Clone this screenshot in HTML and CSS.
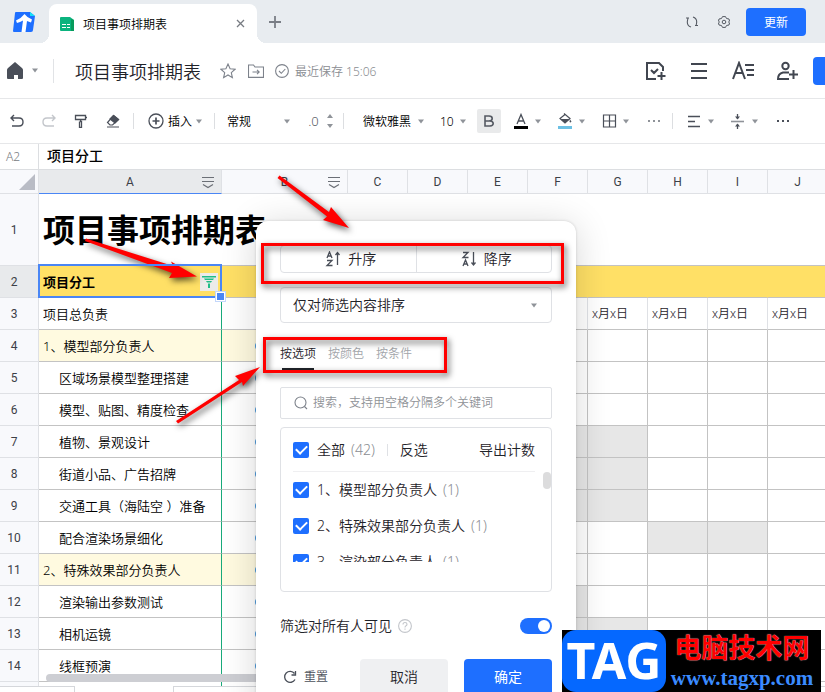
FILE: index.html
```html
<!DOCTYPE html>
<html lang="zh-CN">
<head>
  <meta charset="UTF-8">
  <meta name="viewport" content="width=device-width, initial-scale=1.0">
  <title>项目事项排期表</title>
  <link rel="stylesheet" href="styles.css">
</head>
<body>
  <!-- 图标 -->
  <svg class="sprite" aria-hidden="true">
    <symbol id="caret" viewBox="0 0 6 5"><path d="M0 0.5h6L3 4.5z" fill="#8f9399"/></symbol>
    <symbol id="lines" viewBox="0 0 14 14"><path d="M1 2.5h12M1 6.5h12M2 9.5l5 3 5-3" fill="none" stroke="#6b6f76" stroke-width="1.2"/></symbol>
  </svg>

  <!-- 标签栏 -->
  <div class="tabbar">
    <svg class="logo" width="24" height="22" viewBox="0 0 24 22">
      <path d="M4 1h14l5 4-2 14q0 2-2 2H2q-1 0-1-1L3 2q0-1 1-1z" fill="#1e6fff"/>
      <path d="M18 1l5 4h-5z" fill="#14e0f5"/>
      <path d="M4 9.500q5-2 8.500-6.500 3 4 7.500 5.500l-1 3q-2-1-4-1.500L13.500 21h-4L11 9.500Q8 11 5 12z" fill="#fff"/>
    </svg>
    <div class="doc-tab">
      <svg width="14" height="14" viewBox="0 0 14 14">
        <path d="M1 0h9l4 3v10q0 1-1 1H1q-1 0-1-1V1q0-1 1-1z" fill="#0bb37e"/>
        <path d="M11 2l3 1v11h-3z" fill="#079b5c"/>
        <path d="M2 7.5h4M7 7.5h3M2 10.5h4M7 10.5h3" stroke="#fff" stroke-width="1.2"/>
      </svg>
      <span class="doc-tab-title">项目事项排期表</span>
      <button class="plain" aria-label="关闭"><svg width="9" height="9" viewBox="0 0 9 9"><path d="M1 1l7 7M8 1L1 8" stroke="#777b82" stroke-width="1.3"/></svg></button>
    </div>
    <button class="plain add-tab" aria-label="新建"><svg width="12" height="12" viewBox="0 0 12 12"><path d="M6 0v12M0 6h12" stroke="#7a7e86" stroke-width="1.8"/></svg></button>
    <div class="tabbar-right">
      <button class="plain" aria-label="刷新"><svg width="12" height="12" viewBox="0 0 12 12" fill="none" stroke="#555a63" stroke-width="1.1"><path d="M5 11Q0.500 9.500 1.500 4.500L2 2M0 2h3M7 1q4.500 1.500 3.500 6.500L10 10M9 9.500h3"/></svg></button>
      <button class="plain" aria-label="设置"><svg width="12" height="12" viewBox="0 0 12 12" fill="none" stroke="#555a63" stroke-width="1"><path d="M4.500 0.600h3l1 1.900 2.500.5.5 2-1 1 1 1-.5 2-2.500.5-1 1.900h-3l-1-1.900L1 9 .5 7l1-1-1-1L1 3l2.500-.5z"/><circle cx="6" cy="6" r="1.800"/></svg></button>
      <button class="update">更新</button>
    </div>
  </div>

  <!-- 文档标题 -->
  <header class="header">
    <button class="plain home" aria-label="首页">
      <svg width="16" height="17" viewBox="0 0 16 17"><path d="M8 0l7 6q1 1 1 2v8q0 1-1 1h-4v-4H7v4H1q-1 0-1-1V8q0-1 1-2z" fill="#4a4f59"/></svg>
      <svg width="6" height="5"><use href="#caret"/></svg>
    </button>
    <span class="header-line"></span>
    <h1 class="doc-title">项目事项排期表</h1>
    <div class="doc-state">
      <svg width="16" height="16" viewBox="0 0 16 16"><path d="M8 1l2.100 4.700 5 .5-3.800 3.400 1.100 5L8 12l-4.400 2.600 1.100-5L.9 6.200l5-.5z" fill="none" stroke="#7d828b" stroke-width="1.100"/></svg>
      <svg width="16" height="14" viewBox="0 0 16 14" fill="none" stroke="#7d828b" stroke-width="1.100"><path d="M.5 1h5l1.500 2h8.500v10.400H.5zM4.500 8h6.500M9 5.800L11.200 8 9 10.200"/></svg>
      <span class="saved">
        <svg width="14" height="14" viewBox="0 0 14 14" fill="none" stroke="#7d828b" stroke-width="1.100"><circle cx="7" cy="7" r="6.400"/><path d="M4 7l2.300 2.300L10.300 5"/></svg>
        最近保存 15:06
      </span>
    </div>
    <div class="header-right">
      <button class="plain" aria-label="待办"><svg width="20" height="20" viewBox="0 0 20 20" fill="none" stroke="#414650" stroke-width="2"><path d="M10 18H1V2h12l4 4v4M5 9l3 3 4-4M15.500 11v8M11.500 15h8"/></svg></button>
      <button class="plain" aria-label="菜单"><svg width="20" height="20" viewBox="0 0 20 20" stroke="#414650" stroke-width="2"><path d="M2 3h16M2 10h16M2 17h16"/></svg></button>
      <button class="plain" aria-label="文字"><svg width="22" height="20" viewBox="0 0 22 20" fill="none" stroke="#414650" stroke-width="2"><path d="M1 18L7 2l6 16M3 12h8M13 4h9M14 9h8M15 14h7"/></svg></button>
      <button class="plain" aria-label="添加成员"><svg width="21" height="20" viewBox="0 0 21 20" fill="none" stroke="#414650" stroke-width="2"><circle cx="8.500" cy="5" r="3.200"/><path d="M12 11.500H6q-5 1-5 6.500h11M16.500 9v9M12 13.500h9"/></svg></button>
    </div>
    <button class="share" aria-label="分享"></button>
  </header>

  <!-- 工具栏 -->
  <div class="toolbar">
    <button class="tool" aria-label="撤销"><svg width="14" height="14" viewBox="0 0 14 14" fill="none" stroke="#4a4f59" stroke-width="1.400"><path d="M4 1L1 4l3 3M1 4h8q4 0 4 4t-4 4H2"/></svg></button>
    <button class="tool" aria-label="重做"><svg width="14" height="14" viewBox="0 0 14 14" fill="none" stroke="#c3c6cb" stroke-width="1.400"><path d="M10 1l3 3-3 3M13 4H5Q1 4 1 8t4 4h7"/></svg></button>
    <button class="tool" aria-label="格式刷"><svg width="14" height="14" viewBox="0 0 14 14" fill="none" stroke="#4a4f59" stroke-width="1.300"><path d="M1.500 1.500h10v4h-10zM11.500 3.500h1.500M6.500 5.500v2h1v6h-2v-6"/></svg></button>
    <button class="tool" aria-label="清除格式"><svg width="14" height="14" viewBox="0 0 14 14" fill="none" stroke="#4a4f59" stroke-width="1.200"><path d="M7.500 1.500l5 4-6 5.500H4L1.500 8.500zM1 13h12"/><path d="M7.500 1.500l5 4-3.500 3.500-5-4z" fill="#4a4f59"/></svg></button>
    <span class="tool-line"></span>
    <button class="tool insert">
      <svg width="16" height="16" viewBox="0 0 16 16" fill="none" stroke="#4a4f59" stroke-width="1.300"><circle cx="8" cy="8" r="7"/><path d="M8 4.500v7M4.500 8h7" stroke-width="1.700"/></svg>
      插入
      <svg width="6" height="5"><use href="#caret"/></svg>
    </button>
    <span class="tool-line"></span>
    <label class="pick pick-format">
      <select aria-label="数字格式"><option>常规</option></select>
      <svg width="6" height="5"><use href="#caret"/></svg>
    </label>
    <button class="tool decimal">
      .0
      <svg width="6" height="14" viewBox="0 0 6 14" fill="#8f9399"><path d="M0 4h6L3 0zM0 10h6L3 14z"/></svg>
    </button>
    <span class="tool-line"></span>
    <label class="pick pick-font">
      <select aria-label="字体"><option>微软雅黑</option></select>
      <svg width="6" height="5"><use href="#caret"/></svg>
    </label>
    <label class="pick pick-size">
      <select aria-label="字号"><option>10</option></select>
      <svg width="6" height="5"><use href="#caret"/></svg>
    </label>
    <button class="tool bold" aria-label="加粗"><svg width="10" height="12" viewBox="0 0 10 12" fill="none" stroke="#555a63" stroke-width="1.600"><path d="M1 1h4q3.200 0 3.200 2.500T5 6H1zM1 6h5q3.200.2 3.200 2.500T6 11H1z"/></svg></button>
    <button class="tool group" aria-label="文字颜色">
      <svg width="16" height="16" viewBox="0 0 16 16" fill="none"><path d="M4 11L8 1.500 12 11M5.300 8h5.400" stroke="#4a4f59" stroke-width="1.300"/><path d="M1 13h14v3H1z" fill="#000"/></svg>
      <svg width="6" height="5"><use href="#caret"/></svg>
    </button>
    <button class="tool group" aria-label="填充颜色">
      <svg width="16" height="16" viewBox="0 0 16 16" fill="none"><path d="M7 .5l6 5-5 4.500L3 5.500 8 1.500" stroke="#4a4f59" stroke-width="1.200"/><path d="M3.500 6h9L8 10zM13 6.500l1.500 2q-1.500 2-2-0z" fill="#4a4f59"/><path d="M1 13h14v3H1z" fill="#6cc0e4"/></svg>
      <svg width="6" height="5"><use href="#caret"/></svg>
    </button>
    <button class="tool group" aria-label="边框">
      <svg width="16" height="16" viewBox="0 0 16 16" fill="none" stroke="#4a4f59" stroke-width="1.200"><path d="M2.500 2h12v12h-12zM8.500 2v12M2.500 8h12"/></svg>
      <svg width="6" height="5"><use href="#caret"/></svg>
    </button>
    <button class="tool more" aria-label="更多格式"><svg width="14" height="2" viewBox="0 0 14 2" fill="#8f9399"><path d="M1 0h2v2H1zM6 0h2v2H6zM11 0h2v2h-2z"/></svg></button>
    <span class="tool-line"></span>
    <button class="tool group" aria-label="水平对齐">
      <svg width="16" height="16" viewBox="0 0 16 16" stroke="#4a4f59" stroke-width="1.300"><path d="M2 3.500h12M2 8.500h7M2 13.500h12"/></svg>
      <svg width="6" height="5"><use href="#caret"/></svg>
    </button>
    <button class="tool group" aria-label="垂直对齐">
      <svg width="16" height="16" viewBox="0 0 16 16"><path d="M1 8.500h13" stroke="#8f9399" stroke-width="1.600"/><path d="M7.500 1v5M7.500 16v-5" stroke="#4a4f59" stroke-width="1.300"/><path d="M5 3.500h5l-2.500 3zM5 13.500h5L7.500 10.500z" fill="#4a4f59"/></svg>
      <svg width="6" height="5"><use href="#caret"/></svg>
    </button>
    <button class="tool more" aria-label="更多"><svg width="14" height="2" viewBox="0 0 14 2" fill="#4a4f59"><path d="M1 0h2v2H1zM6 0h2v2H6zM11 0h2v2h-2z"/></svg></button>
  </div>

  <div class="formula">
    <span class="cell-name">A2</span>
    <span class="cell-value">项目分工</span>
  </div>

  <!-- 表格 -->
  <main class="sheet">
    <table class="grid">
      <colgroup>
        <col class="col-num"><col class="col-a"><col class="col-b"><col><col><col><col><col><col><col><col>
      </colgroup>
      <thead>
        <tr>
          <th class="corner"><svg width="16" height="16" viewBox="0 0 16 16"><path d="M16 0v16H0z" fill="#b9bcc5"/></svg></th>
          <th class="picked">A<svg class="th-icon" width="14" height="14"><use href="#lines"/></svg></th>
          <th>B<svg class="th-icon" width="14" height="14"><use href="#lines"/></svg></th>
          <th>C</th><th>D</th><th>E</th><th>F</th><th>G</th><th>H</th><th>I</th><th>J</th>
        </tr>
      </thead>
      <tbody>
        <tr class="row-title"><th>1</th><td>项目事项排期表</td><td></td><td></td><td></td><td></td><td></td><td></td><td></td><td></td><td></td></tr>
        <tr class="row-head">
          <th class="picked">2</th>
          <td>
            项目分工
            <button class="filter-btn" aria-label="筛选"><svg width="14" height="12" viewBox="0 0 14 12" fill="#1fbd88"><path d="M0 0h14v1.500H0zM2 2.500h10L11 4H3zM4 5h6L9 6.500H5zM6 7.500h2V12H6z"/></svg></button>
            <span class="selection"></span>
          </td>
          <td></td><td></td><td></td><td></td><td></td><td></td><td></td><td></td><td></td>
        </tr>
        <tr class="row-date"><th>3</th><td>项目总负责</td><td></td><td></td><td></td><td></td><td></td><td>x月x日</td><td>x月x日</td><td>x月x日</td><td>x月x日</td></tr>
        <tr class="row-group"><th>4</th><td>1、模型部分负责人</td><td><i class="dot"></i></td><td></td><td></td><td></td><td></td><td></td><td></td><td></td><td></td></tr>
        <tr><th>5</th><td>区域场景模型整理搭建</td><td><i class="dot"></i></td><td></td><td></td><td></td><td></td><td></td><td></td><td></td><td></td></tr>
        <tr><th>6</th><td>模型、贴图、精度检查</td><td><i class="dot"></i></td><td></td><td></td><td></td><td></td><td></td><td></td><td></td><td></td></tr>
        <tr><th>7</th><td>植物、景观设计</td><td><i class="dot"></i></td><td></td><td></td><td></td><td class="busy"></td><td class="busy"></td><td></td><td></td><td></td></tr>
        <tr><th>8</th><td>街道小品、广告招牌</td><td><i class="dot"></i></td><td></td><td></td><td></td><td class="busy"></td><td class="busy"></td><td></td><td></td><td></td></tr>
        <tr><th>9</th><td>交通工具（海陆空 ）准备</td><td><i class="dot"></i></td><td></td><td></td><td></td><td class="busy"></td><td class="busy"></td><td></td><td></td><td></td></tr>
        <tr><th>10</th><td>配合渲染场景细化</td><td><i class="dot"></i></td><td></td><td></td><td></td><td></td><td></td><td class="busy"></td><td class="busy"></td><td></td></tr>
        <tr class="row-group"><th>11</th><td>2、特殊效果部分负责人</td><td><i class="dot"></i></td><td></td><td></td><td></td><td></td><td></td><td></td><td></td><td></td></tr>
        <tr><th>12</th><td>渲染输出参数测试</td><td><i class="dot"></i></td><td></td><td></td><td></td><td class="busy"></td><td></td><td></td><td></td><td></td></tr>
        <tr><th>13</th><td>相机运镜</td><td><i class="dot"></i></td><td></td><td></td><td></td><td class="busy"></td><td class="busy"></td><td></td><td></td><td></td></tr>
        <tr><th>14</th><td>线框预演</td><td><i class="dot"></i></td><td></td><td></td><td></td><td></td><td></td><td></td><td></td><td></td></tr>
        <tr><th></th><td></td><td></td><td></td><td></td><td></td><td></td><td></td><td></td><td></td><td></td></tr>
      </tbody>
    </table>
    <span class="h-scroll"></span>
  </main>
  <div class="sheet-tabs">
    <span class="sheet-tab-first"></span>
    <span class="sheet-tab-rest"></span>
  </div>

  <!-- 筛选面板 -->
  <section class="panel">
    <div class="sort">
      <button>
        <svg width="16" height="16" viewBox="0 0 16 16" fill="none" stroke="#4a4f59" stroke-width="1.300"><path d="M2 7l2.500-6L7 7M3 5h3M2 9.500h5L2 14.500h5.500M12.500 14V2M10.500 4l2-2.500 2 2.500"/></svg>
        升序
      </button>
      <button>
        <svg width="16" height="16" viewBox="0 0 16 16" fill="none" stroke="#4a4f59" stroke-width="1.300"><path d="M2 1.500h5L2 6.500h5.500M2 15l2.500-6L7 15M3 13h3M12.500 1v13M10.500 11.500l2 2.500 2-2.500"/></svg>
        降序
      </button>
    </div>
    <label class="scope">
      <select aria-label="排序范围"><option>仅对筛选内容排序</option></select>
      <svg width="6" height="5"><use href="#caret"/></svg>
    </label>
    <div class="modes">
      <button class="active">按选项</button>
      <button>按颜色</button>
      <button>按条件</button>
    </div>
    <label class="search">
      <svg width="14" height="14" viewBox="0 0 14 14" fill="none" stroke="#7d828b" stroke-width="1.100"><circle cx="6.500" cy="6.500" r="5.500"/><path d="M10.500 10.500l2.500 2.500"/></svg>
      <input type="text" aria-label="搜索" placeholder="搜索，支持用空格分隔多个关键词">
    </label>
    <div class="options">
      <div class="options-head">
        <label class="check"><input type="checkbox" checked>全部 <em>(42)</em></label>
        <span class="options-line"></span>
        <button class="plain">反选</button>
        <button class="plain export">导出计数</button>
      </div>
      <div class="options-list">
        <label class="check"><input type="checkbox" checked>1、模型部分负责人 <em>(1)</em></label>
        <label class="check"><input type="checkbox" checked>2、特殊效果部分负责人 <em>(1)</em></label>
        <label class="check"><input type="checkbox" checked>3、渲染部分负责人 <em>(1)</em></label>
      </div>
      <span class="options-scroll"></span>
    </div>
    <div class="visible">
      <label for="visible-all">筛选对所有人可见</label>
      <svg width="14" height="14" viewBox="0 0 14 14" fill="none" stroke="#c3c6cb" stroke-width="1.100"><circle cx="7" cy="7" r="6.400"/><path d="M5 5.500q0-2 2-2t2 1.800q0 1-1 1.500T7 8.500M7 9.500v1.300"/></svg>
      <input class="switch" type="checkbox" id="visible-all" checked>
    </div>
    <div class="actions">
      <button class="plain reset">
        <svg width="14" height="14" viewBox="0 0 14 14" fill="none" stroke="#4a4f59" stroke-width="1.300"><path d="M11.500 3.500A5.500 5.500 0 1 0 12 9.500M12.500 1v4h-4"/></svg>
        重置
      </button>
      <button class="btn">取消</button>
      <button class="btn btn-main">确定</button>
    </div>
  </section>

  <!-- 标注 -->
  <svg class="marks" width="825" height="692" viewBox="0 0 825 692" aria-hidden="true">
    <g fill="none" stroke="#f00" stroke-width="3">
      <path d="M262.500 244.500h300v38h-300z"/>
      <path d="M264.500 338.500h181v33h-181z"/>
    </g>
    <g fill="#f00">
      <path d="M277.500 178l2-2.500L329 212l2-5 18 21-26-8 4-3.500z"/>
      <path d="M85 241l1-2.500 87 27.500-2-4.500 26 15-28 1.500 3-5z"/>
      <path d="M178 423.500l-2-2.500 63-41-4-4 25-9-17 19-1-4z"/>
    </g>
  </svg>

  <div class="brand">
    <strong class="brand-tag">TAG</strong>
    <div class="brand-text">
      <span class="brand-name">电脑技术网</span>
      <span class="brand-url">www.tagxp.com</span>
    </div>
  </div>
</body>
</html>
```
FILE: styles.css
```css
* {
  box-sizing: border-box;
}
body {
  position: relative;
  display: flex;
  flex-direction: column;
  height: 100vh;
  margin: 0;
  overflow: hidden;
  background: #fff;
  color: #1f2329;
  font-family: "Noto Sans", "Noto Sans CJK SC", sans-serif;
  font-size: 12px;
  font-weight: 350;
}
button,
input,
select {
  margin: 0;
  padding: 0;
  border: 0;
  background: none;
  color: inherit;
  font: inherit;
}
button {
  cursor: pointer;
}
select {
  appearance: none;
  width: 100%;
  outline: none;
}
svg {
  flex: none;
}
.sprite {
  position: absolute;
  width: 0;
  height: 0;
}
.plain {
  display: flex;
  align-items: center;
}

/* 标签栏 */
.tabbar {
  display: flex;
  flex: none;
  align-items: center;
  height: 43px;
  padding: 0 19px 0 12px;
  background: #e8ecf0;
}
.doc-tab {
  position: relative;
  display: flex;
  align-items: center;
  align-self: flex-end;
  width: 208px;
  height: 39px;
  margin-left: 13px;
  padding: 0 12px 0 11px;
  border-radius: 8px 8px 0 0;
  background: #fff;
}
.doc-tab::before,
.doc-tab::after {
  content: "";
  position: absolute;
  bottom: 0;
  width: 9px;
  height: 9px;
}
.doc-tab::before {
  left: -9px;
  background: radial-gradient(circle at 0 0, transparent 9px, #fff 9px);
}
.doc-tab::after {
  right: -9px;
  background: radial-gradient(circle at 100% 0, transparent 9px, #fff 9px);
}
.doc-tab-title {
  flex: 1;
  margin-left: 9px;
  color: #000;
}
.add-tab {
  margin-left: 12px;
}
.tabbar-right {
  display: flex;
  align-items: center;
  gap: 20px;
  margin-left: auto;
}
.update {
  width: 60px;
  height: 28px;
  margin-left: -4px;
  border-radius: 4px;
  background: #1e6fff;
  color: #fff;
  font-weight: 400;
}

/* 文档标题 */
.header {
  display: flex;
  flex: none;
  align-items: center;
  height: 56px;
  padding-left: 7px;
  border-bottom: 1px solid #e6e7e9;
}
.home {
  gap: 9px;
}
.header-line {
  width: 1px;
  height: 24px;
  margin: 0 21px 0 15px;
  background: #e1e3e6;
}
.doc-title {
  margin: 0;
  font-size: 18px;
  font-weight: 350;
}
.doc-state {
  display: flex;
  align-items: center;
  gap: 12px;
  margin-left: 19px;
}
.saved {
  display: flex;
  align-items: center;
  gap: 6px;
  margin-left: -1px;
  color: #8a8d92;
}
.header-right {
  display: flex;
  gap: 23px;
  margin-left: auto;
}
.share {
  width: 12px;
  height: 28px;
  margin-left: 15px;
  border-radius: 4px 0 0 4px;
  background: #1e6fff;
}

/* 工具栏 */
.toolbar {
  display: flex;
  flex: none;
  align-items: center;
  height: 45px;
  padding-left: 1px;
  border-bottom: 1px solid #e6e7e9;
  color: #000;
}
.tool {
  display: flex;
  flex: none;
  align-items: center;
  justify-content: center;
  width: 32px;
  height: 24px;
}
.tool-line {
  flex: none;
  width: 1px;
  height: 16px;
  background: #dcdee1;
}
.more + .tool-line {
  margin-right: 8px;
}
.tool + .tool-line {
  margin-left: 4px;
}
.tool.insert {
  gap: 4px;
  width: 76px;
  padding-left: 6px;
}
.pick {
  display: flex;
  flex: none;
  align-items: center;
}
.pick-format {
  width: 63px;
  margin-left: 12px;
}
.pick-font {
  width: 61px;
  margin-left: 19px;
}
.pick-size {
  width: 26px;
  margin: 0 11px 0 16px;
}
.decimal {
  gap: 8px;
  width: 49px;
  padding-left: 12px;
  color: #555a63;
  font-size: 13px;
}
.tool.bold {
  width: 24px;
  margin-right: 7px;
  border-radius: 2px;
  background: #e9eaeb;
}
.group {
  justify-content: flex-start;
  gap: 6px;
  width: 44px;
  padding-left: 5px;
}
.more {
  width: 28px;
}

.formula {
  display: flex;
  flex: none;
  align-items: center;
  height: 26px;
  border-bottom: 1px solid #dcdee1;
}
.cell-name {
  width: 39px;
  padding-left: 6px;
  border-right: 1px solid #dcdee1;
  color: #777b82;
  line-height: 25px;
}
.cell-value {
  padding: 0 0 3px 8px;
  color: #000;
  font-size: 14px;
  font-weight: 500;
}

/* 表格 */
.sheet {
  position: relative;
  flex: 1;
  min-height: 0;
  overflow: hidden;
}
.grid {
  width: 828px;
  border-collapse: separate;
  border-spacing: 0;
  table-layout: fixed;
  line-height: 20px;
}
.col-num {
  width: 39px;
}
.col-a {
  width: 183px;
}
.col-b {
  width: 126px;
}
.grid tr {
  height: 32px;
}
.grid thead tr {
  height: 24px;
}
.grid th {
  position: relative;
  padding: 0;
  border-right: 1px solid #dfe1e5;
  border-bottom: 1px solid #dfe1e5;
  background: #f8f9fc;
  color: #3c4047;
  font-family: Roboto, sans-serif;
  font-weight: 400;
}
.grid tbody th {
  padding-right: 10px;
}
.grid thead .corner {
  padding: 0 3px 3px 0;
  line-height: 0;
  text-align: right;
  vertical-align: bottom;
}
.grid .picked {
  background: #e8eaec;
}
.grid thead .picked {
  border-bottom-color: #4a86f5;
}
.th-icon {
  position: absolute;
  top: 5px;
  right: 6px;
}
.grid td {
  padding: 0;
  border-right: 1px solid #c3c3c3;
  border-bottom: 1px solid #c3c3c3;
  white-space: nowrap;
}
.grid td:nth-child(2) {
  position: relative;
  padding-left: 20px;
  border-right-color: #18a97a;
  color: #000;
  font-size: 13px;
}
.grid .row-title {
  height: 72px;
}
.grid .row-title td {
  border-right: 0;
}
.grid .row-title td:nth-child(2) {
  padding-left: 4px;
  font-size: 32px;
  font-weight: 700;
}
.grid .row-head td {
  border-right-color: #ffe066;
  background: #ffe066;
}
.grid .row-head td:nth-child(2) {
  padding-left: 4px;
  font-weight: 700;
}
.grid .row-date td {
  padding-left: 4px;
  border-right-color: #dfe1e5;
}
.grid .row-date td:nth-child(2),
.grid .row-group td:nth-child(2) {
  padding-left: 4px;
  border-right-color: #18a97a;
}
.row-group td:nth-child(-n+3) {
  background: #fffae0;
}
.busy {
  background: #e7e7e7;
}
.dot {
  display: block;
  width: 8px;
  height: 8px;
  margin-left: 33px;
  border-radius: 50%;
  background: #4a9be0;
}
.filter-btn {
  position: absolute;
  top: 7px;
  right: 3px;
  display: flex;
  align-items: center;
  justify-content: center;
  width: 18px;
  height: 18px;
  background: #ebebeb;
}
.selection {
  position: absolute;
  inset: -2px -1px -1px;
  z-index: 1;
  border: 2px solid #4a86f5;
  pointer-events: none;
}
.selection::after {
  content: "";
  position: absolute;
  right: -6px;
  bottom: -6px;
  width: 9px;
  height: 9px;
  border: 1px solid #c3d7fb;
  background: #4a86f5;
  box-shadow: inset 0 0 0 1px #fff;
}
.h-scroll {
  position: absolute;
  bottom: 4px;
  left: 46px;
  width: 60%;
  height: 8px;
  border-radius: 4px;
  background: #cdced3;
}
.sheet-tabs {
  display: flex;
  flex: none;
  justify-content: space-between;
  height: 6px;
  background: #fff;
}
.sheet-tab-first {
  width: 75px;
  border: solid #d5d7db;
  border-width: 1px 1px 0 0;
}
.sheet-tab-rest {
  flex: 1;
  margin-left: 98px;
  border: solid #d5d7db;
  border-width: 1px 0 0 1px;
}

/* 筛选面板 */
.panel {
  position: absolute;
  top: 221px;
  left: 256px;
  width: 320px;
  padding: 24px;
  border-radius: 12px;
  background: #fff;
  box-shadow: 0 0 3px rgba(0, 0, 0, 0.16), 0 4px 36px rgba(0, 0, 0, 0.16);
  font-size: 14px;
  line-height: 20px;
}
.sort {
  display: flex;
  height: 28px;
  border: 1px solid #dfe1e5;
  border-radius: 4px;
}
.sort button {
  display: flex;
  flex: 1;
  align-items: center;
  justify-content: center;
  gap: 7px;
  padding-left: 5px;
}
.sort button + button {
  border-left: 1px solid #dfe1e5;
}
.scope,
.search {
  display: flex;
  align-items: center;
  border: 1px solid #dfe1e5;
}
.scope {
  height: 36px;
  margin-top: 14px;
  padding: 0 14px 0 12px;
  border-radius: 4px;
}
.modes {
  display: flex;
  gap: 12px;
  height: 26px;
  margin: 21px 0 17px;
  color: #a2a5aa;
  font-size: 12px;
}
.modes button {
  position: relative;
  padding-bottom: 6px;
}
.modes .active {
  color: #1f2329;
}
.modes .active::after {
  content: "";
  position: absolute;
  right: 2px;
  bottom: 0;
  left: 2px;
  height: 2px;
  background: #1f2329;
}
.search {
  gap: 5px;
  height: 32px;
  padding: 0 13px;
  border-radius: 2px;
  font-size: 12px;
}
.search input {
  flex: 1;
  outline: none;
}
.search input::placeholder {
  color: #8f9297;
}
.options {
  position: relative;
  height: 165px;
  margin-top: 8px;
  padding: 0 16px 0 12px;
  border: 1px solid #dfe1e5;
  border-radius: 4px;
}
.options-head {
  display: flex;
  align-items: center;
  height: 44px;
  border-bottom: 1px solid #efeff1;
}
.check {
  display: flex;
  align-items: center;
  height: 36px;
}
.check em {
  margin-left: 6px;
  color: #8a8d92;
  font-style: normal;
}
.check input {
  display: grid;
  appearance: none;
  place-items: center;
  width: 16px;
  height: 16px;
  margin-right: 8px;
  border-radius: 2px;
  background: #1e6fff;
}
.check input::before {
  content: "";
  width: 9px;
  height: 5px;
  margin-bottom: 3px;
  border: solid #fff;
  border-width: 0 0 2px 2px;
  transform: rotate(-45deg);
}
.options-line {
  width: 1px;
  height: 12px;
  margin: 0 12px;
  background: #dfe1e5;
}
.export {
  margin-left: auto;
}
.options-list {
  height: 90px;
  overflow: hidden;
}
.options-scroll {
  position: absolute;
  top: 44px;
  right: 0;
  width: 8px;
  height: 17px;
  border-radius: 4px;
  background: #dcdcdd;
}
.visible {
  display: flex;
  align-items: center;
  gap: 6px;
  margin-top: 24px;
}
.switch {
  appearance: none;
  display: flex;
  justify-content: flex-end;
  width: 32px;
  height: 16px;
  margin-left: auto;
  padding: 2px;
  border-radius: 8px;
  background: #1e6fff;
}
.switch::before {
  content: "";
  width: 12px;
  height: 12px;
  border-radius: 50%;
  background: #fff;
}
.actions {
  display: flex;
  gap: 16px;
  margin-top: 23px;
}
.reset {
  gap: 7px;
  margin-right: auto;
  padding-left: 3px;
  color: #4a4f59;
  font-size: 12px;
}
.btn {
  width: 88px;
  height: 36px;
  border-radius: 4px;
  background: #eff0f2;
}
.btn-main {
  background: #1e6fff;
  color: #fff;
  font-weight: 400;
}

/* 标注 */
.marks {
  position: absolute;
  top: 0;
  left: 0;
  filter: drop-shadow(2px 3px 3px rgba(0, 0, 0, 0.65));
  pointer-events: none;
}
.brand {
  position: absolute;
  right: 4px;
  bottom: 0;
  display: flex;
  width: 259px;
  height: 62px;
  background: #000;
}
.brand-tag {
  width: 104px;
  border-radius: 14px;
  background: #0568ff;
  color: #fff;
  font-size: 50px;
  font-weight: 700;
  line-height: 60px;
  text-align: center;
}
.brand-text {
  flex: 1;
  padding-right: 3px;
  text-align: center;
  white-space: nowrap;
}
.brand-name {
  display: block;
  color: #f00;
  font-size: 27px;
  font-weight: 700;
  line-height: 36px;
  text-shadow: 0 0 1px #fff;
}
.brand-url {
  display: block;
  color: #3b8bff;
  font-family: "Liberation Serif", serif;
  font-size: 21px;
  font-weight: 700;
  line-height: 24px;
}
```
